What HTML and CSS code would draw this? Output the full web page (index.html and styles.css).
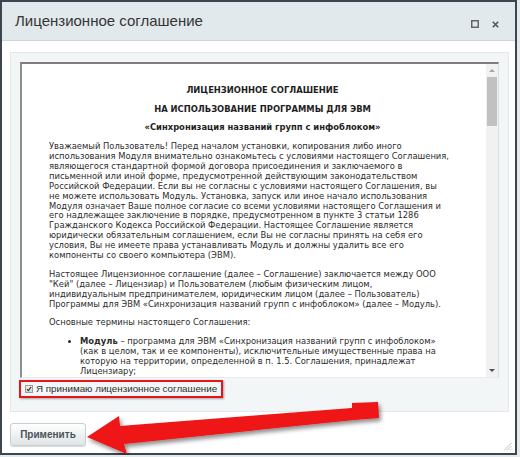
FILE: index.html
```html
<!DOCTYPE html>
<html lang="ru">
<head>
  <meta charset="UTF-8" />
  <title>Лицензионное соглашение</title>
  <link rel="stylesheet" href="styles.css">
</head>
<body>
  <div class="window">
    <div class="titlebar">
      <span class="title">Лицензионное соглашение</span>
      <div class="title-icons">
        <svg width="8" height="8" viewBox="0 0 8 8"><rect x="0.75" y="0.75" width="6.5" height="6.5" fill="none" stroke="#666" stroke-width="1.5"/></svg>
        <svg width="7" height="7" viewBox="0 0 7 7"><path d="M0.8 0.8 L6.2 6.2 M6.2 0.8 L0.8 6.2" stroke="#555" stroke-width="1.6"/></svg>
      </div>
    </div>

    <div class="content">
      <div class="panel">
        <div class="license">
          <div class="license-text">
            <h3>ЛИЦЕНЗИОННОЕ СОГЛАШЕНИЕ</h3>
            <h3>НА ИСПОЛЬЗОВАНИЕ ПРОГРАММЫ ДЛЯ ЭВМ</h3>
            <h3>«Синхронизация названий групп с инфоблоком»</h3>
            <p>Уважаемый Пользователь! Перед началом установки, копирования либо иного<br>
            использования Модуля внимательно ознакомьтесь с условиями настоящего Соглашения,<br>
            являющегося стандартной формой договора присоединения и заключаемого в<br>
            письменной или иной форме, предусмотренной действующим законодательством<br>
            Российской Федерации. Если вы не согласны с условиями настоящего Соглашения, вы<br>
            не можете использовать Модуль. Установка, запуск или иное начало использования<br>
            Модуля означает Ваше полное согласие со всеми условиями настоящего Соглашения и<br>
            его надлежащее заключение в порядке, предусмотренном в пункте 3 статьи 1286<br>
            Гражданского Кодекса Российской Федерации. Настоящее Соглашение является<br>
            юридически обязательным соглашением, если Вы не согласны принять на себя его<br>
            условия, Вы не имеете права устанавливать Модуль и должны удалить все его<br>
            компоненты со своего компьютера (ЭВМ).</p>
            <p>Настоящее Лицензионное соглашение (далее – Соглашение) заключается между ООО<br>
            "Кей" (далее – Лицензиар) и Пользователем (любым физическим лицом,<br>
            индивидуальным предпринимателем, юридическим лицом (далее – Пользователь)<br>
            Программы для ЭВМ «Синхронизация названий групп с инфоблоком» (далее – Модуль).</p>
            <p>Основные термины настоящего Соглашения:</p>
            <ul>
              <li><b>Модуль</b> – программа для ЭВМ «Синхронизация названий групп с инфоблоком»<br>
              (как в целом, так и ее компоненты), исключительные имущественные права на<br>
              которую на территории, определенной в п. 1.5. Соглашения, принадлежат<br>
              Лицензиару;</li>
            </ul>
          </div>
          <div class="scrollbar">
            <span class="scroll-btn up"></span>
            <span class="scroll-thumb"></span>
            <span class="scroll-track"></span>
            <span class="scroll-btn down"></span>
          </div>
        </div>

        <label class="accept">
          <span class="checkbox">
            <svg width="8" height="8" viewBox="0 0 8 8"><path d="M1.2 4.2 L3.2 6.2 L6.9 1.2" fill="none" stroke="#3a3a3a" stroke-width="1.6"/></svg>
          </span>
          <span>Я принимаю лицензионное соглашение</span>
        </label>
      </div>

      <div class="buttons">
        <button class="btn">Применить</button>
      </div>
    </div>

    <svg class="grip" width="9" height="9" viewBox="0 0 9 9">
      <path d="M8.5 1 L1 8.5 M8.5 4 L4 8.5 M8.5 7 L7 8.5" stroke="#b9c0c4" stroke-width="1"/>
    </svg>

    <!-- стрелка-подсказка поверх окна -->
    <svg class="arrow" width="520" height="457" viewBox="0 0 520 457">
      <defs>
        <filter id="shadow" x="-10%" y="-20%" width="120%" height="160%">
          <feDropShadow dx="2" dy="3" stdDeviation="2" flood-color="#000" flood-opacity="0.45"/>
        </filter>
      </defs>
      <polygon filter="url(#shadow)" fill="#ee1313"
        points="87,437 119,416 120,426 352,408 352,403 378,402 379,418 354,420 124,444 127,454"/>
    </svg>
  </div>
</body>
</html>
```

FILE: styles.css
```css
/* Диалог лицензионного соглашения */
body {
  margin: 0;
  padding: 0;
  background: #e6e9eb;
  font-family: "Liberation Sans", Arial, sans-serif;
}

.window {
  position: relative;
  width: 517px;
  height: 455px;
  box-sizing: border-box;
  border: 2px solid #3b4650;
  background: #fff;
}

.titlebar {
  height: 38px;
  display: flex;
  align-items: center;
  justify-content: space-between;
  padding: 0 16px 0 13px;
  background: #e2e9ec;
  border-bottom: 1px solid #cdd5d9;
}

.title {
  font-size: 15px;
  color: #353535;
  margin-top: -1px;
}

.title-icons {
  display: flex;
  align-items: center;
  gap: 13px;
  margin-top: 6px;
}

.title-icons svg {
  display: block;
}

.content {
  padding: 11px 6px 0 8px;
}

.panel {
  background: #f3f6f7;
  border: 1px solid #e1e7ea;
  padding: 9px 9px 13px 9px;
}

/* окно с текстом соглашения */
.license {
  display: flex;
  height: 316px;
  box-sizing: border-box;
  background: #fff;
  border-top: 2px solid #7d7d7d;
  border-left: 2px solid #8e8e8e;
  border-right: 1px solid #dadfe1;
  border-bottom: 1px solid #e8ecee;
}

.license-text {
  flex: 1;
  overflow: hidden;
  padding: 22px 10px 0 27px;
  font-family: "DejaVu Sans", Verdana, sans-serif;
  font-size: 8.4px;
  line-height: 9.9px;
  color: #2b2b2b;
  white-space: nowrap;
}

.license-text h3 {
  margin: 0 0 8.8px;
  text-align: center;
  font-size: 8.4px;
  color: #1e1e1e;
}

.license-text p {
  margin: 0 0 8.8px;
}

.license-text ul {
  margin: 0;
  padding-left: 31px;
}

.scrollbar {
  width: 12px;
  display: flex;
  flex-direction: column;
  background: #f1f1f1;
}

.scroll-btn {
  height: 13px;
  position: relative;
}

.scroll-btn::after {
  content: "";
  position: absolute;
  left: 3px;
  border-left: 3px solid transparent;
  border-right: 3px solid transparent;
}

.scroll-btn.up::after {
  top: 5px;
  border-bottom: 3px solid #a3a3a3;
}

.scroll-btn.down::after {
  top: 5px;
  border-top: 3px solid #505050;
}

.scroll-thumb {
  height: 49px;
  margin: 0 1px;
  background: #c1c1c1;
}

.scroll-track {
  flex: 1;
}

/* флажок согласия, обведён красным */
.accept {
  display: inline-flex;
  align-items: center;
  gap: 3px;
  height: 18px;
  box-sizing: border-box;
  margin: 2px 0 0 -1px;
  padding: 0 4px 0 4px;
  border: 2px solid #e8141b;
  box-shadow: 1px 1px 2px rgba(0, 0, 0, 0.35);
  font-size: 9.8px;
  line-height: 12px;
  color: #2e2e2e;
}

.checkbox {
  width: 8px;
  height: 8px;
  display: flex;
  align-items: center;
  justify-content: center;
  background: linear-gradient(#f2f2f2, #d3d3d3);
  border: 1px solid #9b9b9b;
  box-sizing: border-box;
}

.checkbox svg {
  display: block;
  margin-top: -1px;
}

.buttons {
  margin-top: 11px;
}

.btn {
  width: 76px;
  height: 23px;
  padding: 0;
  font-family: "Liberation Sans", Arial, sans-serif;
  font-size: 10px;
  font-weight: bold;
  color: #4c5358;
  background: linear-gradient(#ffffff, #dfe4e7);
  border: 1px solid #c8cfd3;
  border-radius: 3px;
  box-shadow: 0 1px 1px rgba(0, 0, 0, 0.15);
  cursor: pointer;
}

.grip {
  position: absolute;
  right: 3px;
  bottom: 2px;
}

.arrow {
  position: absolute;
  left: -2px;
  top: -2px;
  pointer-events: none;
}
```
